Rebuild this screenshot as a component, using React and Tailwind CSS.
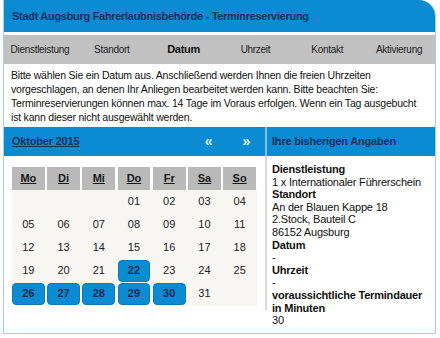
import React from "react";

const navItems = ["Dienstleistung", "Standort", "Datum", "Uhrzeit", "Kontakt", "Aktivierung"];
const weekDays = ["Mo", "Di", "Mi", "Do", "Fr", "Sa", "So"];

// Oktober 2015 starts on a Thursday
const weeks = [
  ["", "", "", "01", "02", "03", "04"],
  ["05", "06", "07", "08", "09", "10", "11"],
  ["12", "13", "14", "15", "16", "17", "18"],
  ["19", "20", "21", "22", "23", "24", "25"],
  ["26", "27", "28", "29", "30", "31", ""],
];
const freeDays = ["22", "26", "27", "28", "29", "30"];

const App = () => {
  return (
    <div className="w-[440px] h-[338px] bg-white pl-[3px] font-['Liberation_Sans',Arial,sans-serif] text-black">
      <div className="w-[433px] h-[334px] border border-t-0 border-[#a7cfe9] rounded-tr-[16px] flex flex-col">
        {/* Titel */}
        <div className="h-[32px] bg-[#0b8bd2] rounded-tr-[16px] flex items-center pl-[8px] pt-[1px] text-[11px] font-bold text-[#16305c] tracking-[-0.3px]">
          Stadt Augsburg Fahrerlaubnisbehörde - Terminreservierung
        </div>

        {/* Navigation */}
        <div className="mt-[3px] h-[29px] bg-[#c1c1c1] grid grid-cols-6 items-center text-[10px] text-[#222] tracking-[-0.3px]">
          {navItems.map((item) => (
            <span key={item} className={item === "Datum" ? "text-center font-bold text-[11px] text-[#111]" : "text-center"}>
              {item}
            </span>
          ))}
        </div>

        {/* Hinweis */}
        <p className="px-[7px] pt-[4px] text-[10.5px] leading-[14px] text-[#111] tracking-[-0.2px] whitespace-nowrap">
          Bitte wählen Sie ein Datum aus. Anschließend werden Ihnen die freien Uhrzeiten
          <br />
          vorgeschlagen, an denen Ihr Anliegen bearbeitet werden kann. Bitte beachten Sie:
          <br />
          Terminreservierungen können max. 14 Tage im Voraus erfolgen. Wenn ein Tag ausgebucht
          <br />
          ist kann dieser nicht ausgewählt werden.
        </p>

        {/* Kopfzeile Kalender / Angaben */}
        <div className="mt-[3px] h-[29px] flex bg-[#0b8bd2] text-[11px] font-bold text-[#16305c] tracking-[-0.2px]">
          <div className="w-[261px] flex items-center pl-[8px] pr-[15px]">
            <span className="underline">Oktober 2015</span>
            <span className="ml-auto text-[#e6f3fb] text-[14px]">«</span>
            <span className="ml-[30px] text-[#e6f3fb] text-[14px]">»</span>
          </div>
          <div className="w-[2px] bg-[#7fc0e8]" />
          <div className="flex-1 flex items-center pl-[5px]">Ihre bisherigen Angaben</div>
        </div>

        <div className="flex flex-1">
          {/* Kalender */}
          <div className="w-[261px] pl-[8px] pt-[11px]">
            <div className="grid grid-cols-7 gap-x-[2.5px] w-[244px]">
              {weekDays.map((d) => (
                <div
                  key={d}
                  className="h-[23px] bg-[#b9b9b9] flex items-center justify-center text-[11px] font-bold text-[#1a1a1a] underline"
                >
                  {d}
                </div>
              ))}
            </div>
            <div className="w-[245px] bg-[#f8f6f3] pb-[1px]">
              {weeks.map((week, wi) => (
                <div key={wi} className="grid grid-cols-7 gap-x-[2.5px] w-[244px] h-[23px]">
                  {week.map((day, di) => {
                    const free = freeDays.includes(day);
                    return (
                      <div key={di} className="flex items-center justify-center">
                        {free ? (
                          <span className="w-full h-[22px] rounded-[4px] bg-[#0b8bd2] border border-[#0a7cc0] flex items-center justify-center text-[11px] font-bold text-[#10294f]">
                            {day}
                          </span>
                        ) : (
                          <span className="text-[11px] text-[#222]">{day}</span>
                        )}
                      </div>
                    );
                  })}
                </div>
              ))}
            </div>
          </div>

          {/* Bisherige Angaben */}
          <div className="flex-1 flex">
            <div className="w-[2px] h-[154px] bg-[#dadada]" />
            <div className="pl-[5px] pt-[7px] text-[11px] leading-[12.6px] text-[#111] tracking-[-0.2px]">
              <div className="font-bold">Dienstleistung</div>
              <div>1 x Internationaler Führerschein</div>
              <div className="font-bold">Standort</div>
              <div>An der Blauen Kappe 18</div>
              <div>2.Stock, Bauteil C</div>
              <div>86152 Augsburg</div>
              <div className="font-bold">Datum</div>
              <div>-</div>
              <div className="font-bold">Uhrzeit</div>
              <div>-</div>
              <div className="font-bold">voraussichtliche Termindauer</div>
              <div className="font-bold">in Minuten</div>
              <div>30</div>
            </div>
          </div>
        </div>
      </div>
    </div>
  );
};

export default App;
